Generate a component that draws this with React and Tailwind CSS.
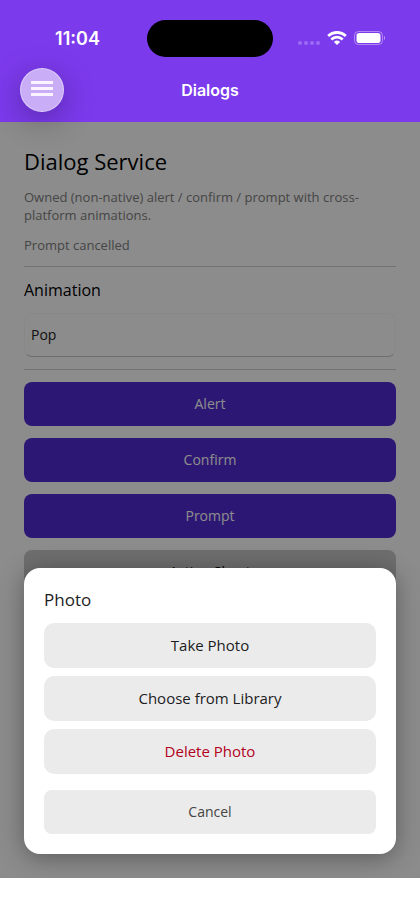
import clsx from 'clsx'

const DEMO_BUTTONS = ['Alert', 'Confirm', 'Prompt']

const SHEET_ACTIONS = [
  { label: 'Take Photo' },
  { label: 'Choose from Library' },
  { label: 'Delete Photo', destructive: true },
]

const ANIMATIONS = ['Pop', 'Fade', 'Slide', 'None']

function StatusBar() {
  return (
    <div className="grid h-[58px] grid-cols-[1fr_auto_1fr] items-start pt-5 text-white">
      <div className="flex h-9 items-center justify-center pt-0.5 pl-2 text-lg leading-6 font-semibold">11:04</div>
      <div className="h-[37px] w-[126px] rounded-full bg-black" />
      <div className="flex h-9 items-center justify-center gap-[7px] pr-[10px]">
        <svg width="22" height="18" viewBox="0 0 22 18" fill="currentColor" className="text-white/25">
          <circle cx="2" cy="14" r="2" />
          <circle cx="8" cy="14" r="2" />
          <circle cx="14" cy="14" r="2" />
          <circle cx="20" cy="14" r="2" />
        </svg>
        <svg width="20" height="14" viewBox="0 0 20 14" fill="none" stroke="currentColor">
          <path d="M1.2 5.1a12.6 12.6 0 0 1 17.6 0" strokeWidth="2.8" />
          <path d="M4.3 8.5a8.2 8.2 0 0 1 11.4 0" strokeWidth="2.7" />
          <path d="M10 14l-3.1-3.1a4.5 4.5 0 0 1 6.2 0z" fill="currentColor" stroke="none" />
        </svg>
        <svg width="31" height="14" viewBox="0 0 31 14" fill="none">
          <rect x="0.5" y="0.5" width="28" height="13" rx="4" stroke="white" strokeOpacity="0.4" />
          <rect x="2.5" y="2" width="24" height="10" rx="2.8" fill="white" />
          <path d="M30 5v4c.6-.3 1-1.100 1-2s-.4-1.700-1-2z" fill="white" fillOpacity="0.5" />
        </svg>
      </div>
    </div>
  )
}

function NavBar() {
  return (
    <div className="grid h-16 grid-cols-[44px_1fr_44px] items-center px-5">
      <button
        type="button"
        aria-label="Menu"
        className="flex size-11 items-center justify-center rounded-full border border-white/40 bg-[#c9adf7] pb-[3px] shadow-[0_8px_32px_rgba(0,0,0,0.3)]"
      >
        <svg width="22" height="16" viewBox="0 0 22 16" fill="#fbf3ff">
          <rect width="22" height="3" y="0" />
          <rect width="22" height="3" y="6" />
          <rect width="22" height="3" y="12" />
        </svg>
      </button>
      <h1 className="text-center text-base font-semibold text-white">Dialogs</h1>
    </div>
  )
}

function ActionSheet() {
  return (
    <div
      role="dialog"
      aria-modal="true"
      aria-labelledby="sheet-title"
      className="rounded-2xl bg-white p-5 shadow-[0_4px_24px_rgba(0,0,0,0.35)]"
    >
      <h2 id="sheet-title" className="mb-3 text-[17px] leading-[23px] text-[#1c1c1e]">Photo</h2>
      <div className="flex flex-col gap-2">
        {SHEET_ACTIONS.map((action) => (
          <button
            key={action.label}
            type="button"
            className={clsx(
              'h-[45px] rounded-[10px] bg-[#ebebeb] text-[15px]',
              action.destructive ? 'text-[#b3001b]' : 'text-[#1c1c1e]',
            )}
          >
            {action.label}
          </button>
        ))}
      </div>
      <button type="button" className="mt-4 h-11 w-full rounded-lg bg-[#ebebeb] text-sm text-[#444444]">
        Cancel
      </button>
    </div>
  )
}

export default function App() {
  return (
    <div className="flex min-h-screen flex-col bg-white font-['Open_Sans',sans-serif]">
      {/* Header */}
      <header className="relative z-10 bg-[#7c3aed] font-[Inter,sans-serif]">
        <StatusBar />
        <NavBar />
      </header>

      <main className="relative flex-1 bg-white">
        <div className="flex flex-col gap-3 p-6">
          <h2 className="text-[22px] leading-[30px] text-black">Dialog Service</h2>
          <p className="text-[13px] leading-[18px] text-[#808080]">
            Owned (non-native) alert / confirm / prompt with cross-platform animations.
          </p>
          <p className="text-[13px] leading-[18px] text-[#808080]">Prompt cancelled</p>
          <hr className="border-[#d0d0d0]" />
          <label htmlFor="animation" className="text-base leading-[22px] text-black">Animation</label>
          <select
            id="animation"
            className="h-11 appearance-none rounded-lg border border-[#f8f8f8] border-b-[#c8c8c8] bg-transparent px-1.5 text-sm text-[#212121]"
          >
            {ANIMATIONS.map((name) => (
              <option key={name}>{name}</option>
            ))}
          </select>
          <hr className="border-[#d0d0d0]" />
          {DEMO_BUTTONS.map((label) => (
            <button key={label} type="button" className="h-11 rounded-lg bg-[#512bd4] text-sm text-white">
              {label}
            </button>
          ))}
          <button type="button" className="h-11 rounded-lg bg-[#c8c8c8] text-sm text-black">
            Action Sheet
          </button>
        </div>

        {/* Dimmed backdrop with the sheet pinned to the bottom */}
        <div className="absolute inset-0 flex flex-col justify-end overflow-hidden bg-black/45 p-6">
          <ActionSheet />
        </div>
      </main>

      {/* Home indicator area */}
      <footer className="h-[34px] bg-white" />
    </div>
  )
}
